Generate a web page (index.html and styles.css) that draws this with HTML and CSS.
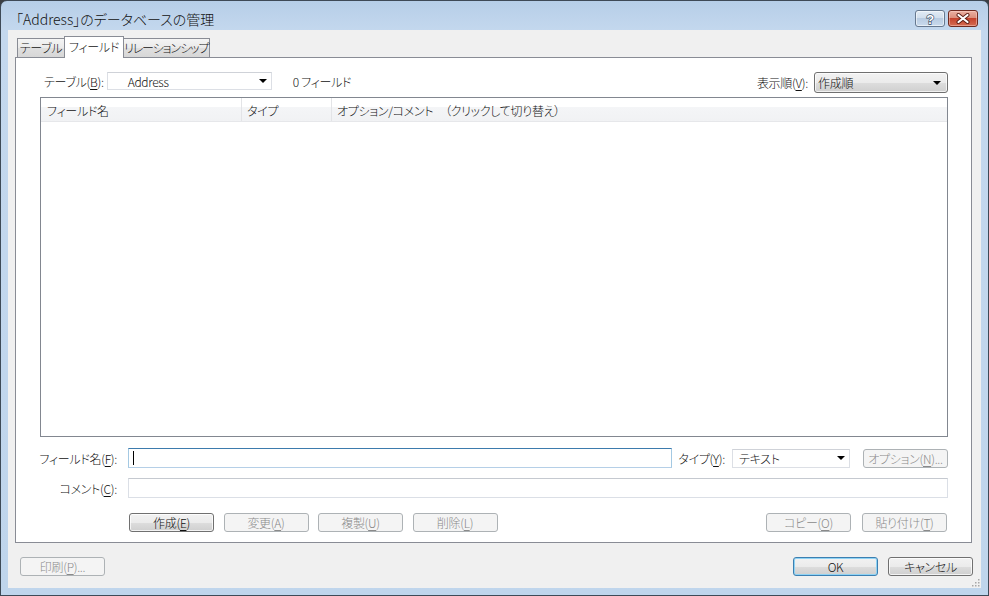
FILE: index.html
```html
<!DOCTYPE html>
<html>
<head>
  <meta charset="UTF-8">
  <title>データベースの管理</title>
  <link rel="stylesheet" href="styles.css">
</head>
<body>
<div class="window">
  <div class="titlebar">
    <span class="title">「Address」のデータベースの管理</span>
    <div class="caption-btns">
      <span class="cap-btn help">
        <svg width="14" height="14" viewBox="0 0 14 14"><text x="7" y="12" text-anchor="middle" font-size="13" font-weight="bold" font-family="Liberation Sans, sans-serif" fill="#fff" stroke="#3a4b63" stroke-width="1.3" paint-order="stroke">?</text></svg>
      </span>
      <span class="cap-btn close">
        <svg width="16" height="11" viewBox="0 0 16 11"><path d="M3.5 2 L12.5 9 M12.5 2 L3.5 9" stroke="#5a1d14" stroke-width="4" stroke-linecap="round"/><path d="M3.5 2 L12.5 9 M12.5 2 L3.5 9" stroke="#fff" stroke-width="2.2" stroke-linecap="round"/></svg>
      </span>
    </div>
  </div>
  <div class="client">
    <div class="tabs">
      <span class="tab t-table">テーブル</span>
      <span class="tab t-field active">フィールド</span>
      <span class="tab t-rel">リレーションシップ</span>
    </div>
    <div class="panel">
      <div class="top-row">
        <span class="lbl-table">テーブル(<u>B</u>):</span>
        <div class="combo flat table-combo"><span class="combo-text">Address</span><i class="arrow"></i></div>
        <span class="count">0 フィールド</span>
        <span class="lbl-order">表示順(<u>V</u>):</span>
        <div class="combo aero order-combo"><span class="combo-text">作成順</span><i class="arrow"></i></div>
      </div>
      <div class="list">
        <div class="list-head">
          <span class="col c1">フィールド名</span>
          <span class="col c2">タイプ</span>
          <span class="col c3">オプション/コメント　（クリックして切り替え）</span>
        </div>
      </div>
      <div class="form-row row-name">
        <span class="flabel">フィールド名(<u>F</u>):</span>
        <div class="textbox focused"><i class="caret"></i></div>
        <span class="tlabel">タイプ(<u>Y</u>):</span>
        <div class="combo flat type-combo"><span class="combo-text">テキスト</span><i class="arrow"></i></div>
        <span class="btn disabled opt-btn">オプション(<u>N</u>)...</span>
      </div>
      <div class="form-row row-comment">
        <span class="flabel">コメント(<u>C</u>):</span>
        <div class="textbox"></div>
      </div>
      <div class="btn-row">
        <span class="btn">作成(<u>E</u>)</span>
        <span class="btn disabled">変更(<u>A</u>)</span>
        <span class="btn disabled">複製(<u>U</u>)</span>
        <span class="btn disabled">削除(<u>L</u>)</span>
        <span class="btn disabled copy-btn">コピー(<u>O</u>)</span>
        <span class="btn disabled">貼り付け(<u>T</u>)</span>
      </div>
    </div>
    <div class="footer">
      <span class="btn disabled">印刷(<u>P</u>)...</span>
      <span class="btn default ok-btn">OK</span>
      <span class="btn">キャンセル</span>
      <svg class="grip" width="10" height="10" viewBox="0 0 10 10">
        <rect x="8" y="2" width="1.5" height="1.5" fill="#a8a8a8"/>
        <rect x="5" y="5" width="1.5" height="1.5" fill="#a8a8a8"/>
        <rect x="8" y="5" width="1.5" height="1.5" fill="#a8a8a8"/>
        <rect x="2" y="8" width="1.5" height="1.5" fill="#a8a8a8"/>
        <rect x="5" y="8" width="1.5" height="1.5" fill="#a8a8a8"/>
        <rect x="8" y="8" width="1.5" height="1.5" fill="#a8a8a8"/>
      </svg>
    </div>
  </div>
</div>
</body>
</html>
```

FILE: styles.css
```css
* {
  box-sizing: border-box;
}
html, body {
  margin: 0;
  padding: 0;
}
body {
  width: 989px;
  height: 596px;
  overflow: hidden;
  background: #3b3f44;
  font-family: "Noto Sans CJK JP", "Noto Sans", sans-serif;
  font-size: 12px;
  font-weight: 300;
  letter-spacing: -0.3px;
  font-feature-settings: "palt";
  color: #111;
}
u {
  text-decoration: underline;
  text-underline-offset: 2px;
}
.window {
  width: 989px;
  height: 596px;
  border: 1px solid #3e4a57;
  border-radius: 7px 7px 0 0;
  background: linear-gradient(#b6cee8, #c4d8ee 30px, #bfd5ec);
  display: flex;
  flex-direction: column;
}
.titlebar {
  height: 29px;
  display: flex;
  align-items: flex-start;
  padding: 0 10px 0 15px;
}
.title {
  font-size: 14px;
  line-height: 20px;
  margin-top: 8px;
  letter-spacing: 0;
}
.caption-btns {
  margin-left: auto;
  margin-top: 9px;
  display: flex;
}
.cap-btn {
  width: 30px;
  height: 17px;
  border-radius: 3px;
  display: flex;
  align-items: center;
  justify-content: center;
}
.cap-btn.help {
  border: 1px solid #66788f;
  background: linear-gradient(#e2ebf5, #d2dfed 45%, #b9cce2 50%, #c9daed);
  box-shadow: inset 0 0 0 1px rgba(255, 255, 255, .55);
}
.cap-btn.close {
  margin-left: 3px;
  border: 1px solid #6e2a20;
  background: linear-gradient(#eab0a2, #dc8f7c 45%, #c5432d 50%, #d46c52);
  box-shadow: inset 0 0 0 1px rgba(255, 220, 210, .45);
}

/* client area */
.client {
  margin: 0 7px;
  height: 558px;
  background: #f0f0f0;
  padding-top: 6px;
  display: flex;
  flex-direction: column;
}
.tabs {
  height: 21px;
  display: flex;
  align-items: flex-end;
  padding-left: 9px;
}
.tab {
  height: 19px;
  line-height: 17px;
  border: 1px solid #898c95;
  border-bottom: none;
  background: linear-gradient(#f4f4f4, #eaeaea 50%, #dfdfdf 51%, #d7d7d7);
  text-align: center;
  white-space: nowrap;
}
.t-table {
  width: 48px;
}
.t-field {
  width: 60px;
  margin-left: -1px;
}
.t-rel {
  width: 87px;
  margin-left: -1px;
  letter-spacing: -1.1px;
  padding-right: 2px;
}
.tab.active {
  height: 22px;
  line-height: 19px;
  margin-bottom: -1px;
  background: #fff;
  position: relative;
  z-index: 1;
}
.panel {
  margin: 0 9px 0 7px;
  height: 486px;
  background: #fff;
  border: 1px solid #898c95;
  padding: 0 23px 0 24px;
}
.top-row {
  margin-top: 14px;
  height: 21px;
  display: flex;
  align-items: flex-start;
}
.lbl-table {
  margin-left: 4px;
  line-height: 19px;
}
.combo {
  display: flex;
  align-items: center;
}
.combo .arrow {
  margin-left: auto;
  width: 0;
  height: 0;
  border-left: 4px solid transparent;
  border-right: 4px solid transparent;
  border-top: 4px solid #000;
}
.combo.flat {
  background: #fff;
  border: 1px solid #dcdfe5;
  border-top-color: #cfd2d8;
}
.table-combo {
  width: 165px;
  height: 18px;
  margin-left: 3px;
  padding: 0 4px 0 20px;
}
.count {
  margin-left: 21px;
  line-height: 19px;
}
.lbl-order {
  margin-left: auto;
  line-height: 21px;
}
.combo.aero {
  border: 1px solid #707070;
  border-radius: 3px;
  background: linear-gradient(#f2f2f2, #ebebeb 50%, #dddddd 51%, #cfcfcf);
  box-shadow: inset 0 0 0 1px rgba(255, 255, 255, .7);
}
.order-combo {
  width: 134px;
  height: 21px;
  margin-left: 6px;
  padding: 0 6px 0 3px;
}
.list {
  margin-top: 4px;
  height: 340px;
  border: 1px solid #828790;
  background: #fff;
}
.list-head {
  height: 24px;
  display: flex;
  background: linear-gradient(#ffffff, #ffffff 38%, #f4f5f7 40%, #f1f2f4);
  border-bottom: 1px solid #e6e7ea;
}
.col {
  padding: 2px 0 0 6px;
  line-height: 21px;
  border-right: 1px solid #e3e4e7;
  white-space: nowrap;
}
.c1 {
  width: 201px;
}
.c2 {
  width: 90px;
  padding-left: 5px;
}
.c3 {
  flex: 1;
  padding-left: 5px;
  border-right: none;
}

/* field form */
.form-row {
  display: flex;
  align-items: center;
  height: 20px;
}
.row-name {
  margin-top: 11px;
}
.row-comment {
  margin-top: 10px;
}
.flabel {
  width: 87px;
  margin-left: -10px;
  text-align: right;
  white-space: nowrap;
}
.textbox {
  flex: 1;
  height: 20px;
  margin-left: 11px;
  background: #fff;
  border: 1px solid #dbdfe6;
  border-top-color: #c5c9d0;
  display: flex;
  align-items: center;
}
.textbox.focused {
  border-color: #3d7bad #a4c9e3 #b5cfe7 #a4c9e3;
}
.caret {
  width: 1px;
  height: 14px;
  margin-left: 4px;
  background: #000;
}
.tlabel {
  margin-left: 6px;
  white-space: nowrap;
}
.type-combo {
  width: 118px;
  height: 19px;
  margin-left: 7px;
  padding: 0 4px 0 6px;
}
.opt-btn {
  margin-left: 13px;
}
.btn {
  width: 85px;
  height: 19px;
  line-height: 17px;
  text-align: center;
  white-space: nowrap;
  border: 1px solid #707070;
  border-radius: 3px;
  background: linear-gradient(#f2f2f2, #ebebeb 50%, #dddddd 51%, #cfcfcf);
  box-shadow: inset 0 0 0 1px rgba(255, 255, 255, .75);
  flex-shrink: 0;
}
.btn.disabled {
  border-color: #adb2b5;
  background: #f4f4f4;
  box-shadow: none;
  color: #8a8a8a;
}
.btn.default {
  border-color: #3c7fb1;
  box-shadow: inset 0 0 0 1px #8fd3f4;
}
.btn-row {
  margin-top: 15px;
  display: flex;
  gap: 9.5px;
  padding-left: 89px;
  padding-right: 1px;
}
.copy-btn {
  margin-left: auto;
  margin-right: 1.5px;
}

/* footer */
.footer {
  position: relative;
  height: 45px;
  display: flex;
  align-items: flex-start;
  gap: 10px;
  padding: 14px 8px 0 12px;
}
.ok-btn {
  margin-left: auto;
}
.grip {
  position: absolute;
  right: 1px;
  bottom: 1px;
}
```
